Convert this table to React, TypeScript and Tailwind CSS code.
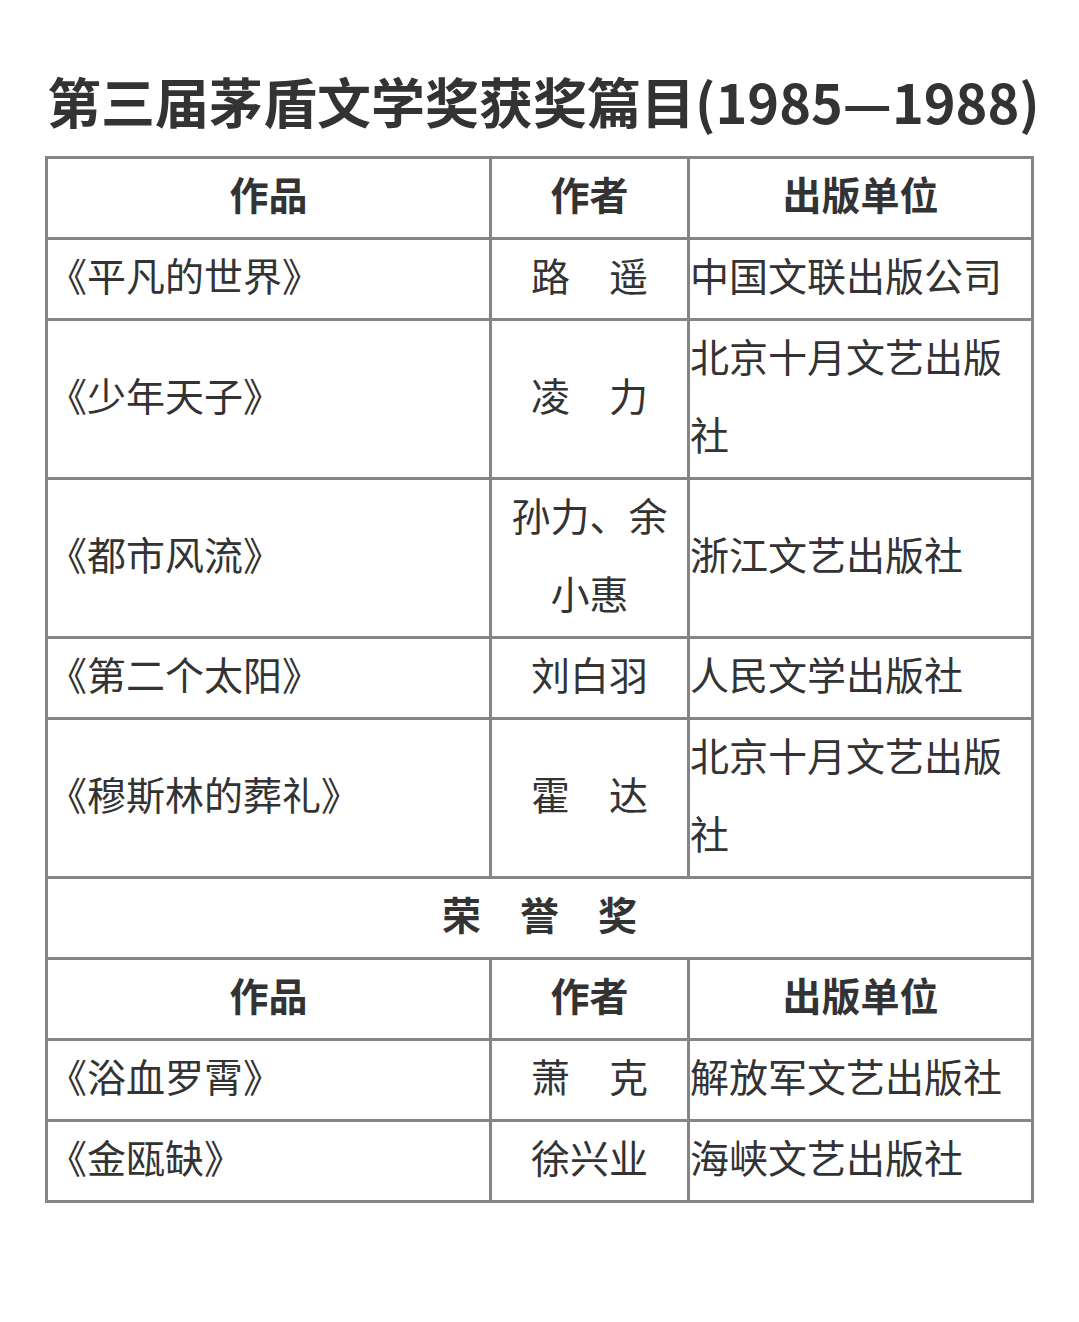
const rows: { work: string; author: React.ReactNode; pub: React.ReactNode }[] = [
  { work: "《平凡的世界》", author: "路　遥", pub: "中国文联出版公司" },
  {
    work: "《少年天子》",
    author: "凌　力",
    pub: (
      <>
        北京十月文艺出版
        <br />社
      </>
    ),
  },
  {
    work: "《都市风流》",
    author: (
      <>
        孙力、余
        <br />
        小惠
      </>
    ),
    pub: "浙江文艺出版社",
  },
  { work: "《第二个太阳》", author: "刘白羽", pub: "人民文学出版社" },
  {
    work: "《穆斯林的葬礼》",
    author: "霍　达",
    pub: (
      <>
        北京十月文艺出版
        <br />社
      </>
    ),
  },
];

const honor = [
  { work: "《浴血罗霄》", author: "萧　克", pub: "解放军文艺出版社" },
  { work: "《金瓯缺》", author: "徐兴业", pub: "海峡文艺出版社" },
];

const cell = "border-[3px] border-[#858585] p-0 align-middle";

// nudges the glyphs up a little to sit like the reference font
function T({ children }: { children: React.ReactNode }) {
  return <span className="block -translate-y-[5px]">{children}</span>;
}

function HeaderRow() {
  return (
    <tr className="font-bold">
      <th className={`${cell} text-center`}>
        <T>作品</T>
      </th>
      <th className={`${cell} text-center`}>
        <T>作者</T>
      </th>
      <th className={`${cell} text-center`}>
        <T>出版单位</T>
      </th>
    </tr>
  );
}

function Row({ work, author, pub }: { work: string; author: React.ReactNode; pub: React.ReactNode }) {
  return (
    <tr>
      <td className={`${cell} text-left`}>
        <T>{work}</T>
      </td>
      <td className={`${cell} text-center`}>
        <T>{author}</T>
      </td>
      <td className={`${cell} text-left`}>
        <T>{pub}</T>
      </td>
    </tr>
  );
}

export default function App() {
  return (
    <div
      className="min-h-[1322px] w-[1079px] bg-white px-[45px] pt-[66px] text-[#333]"
      style={{ fontFamily: '"Noto Sans CJK SC", "Noto Sans", sans-serif' }}
    >
      <h1 className="pl-[2px] text-[54px] font-bold leading-[70px] whitespace-nowrap">
        第三届茅盾文学奖获奖篇目(1985—1988)
      </h1>
      <table className="mt-[20px] w-[986px] table-fixed border-collapse text-[39px] leading-[78px]">
        <colgroup>
          <col className="w-[444px]" />
          <col className="w-[198px]" />
          <col className="w-[344px]" />
        </colgroup>
        <tbody>
          <HeaderRow />
          {rows.map((r, i) => (
            <Row key={i} {...r} />
          ))}
          <tr>
            <td colSpan={3} className={`${cell} text-center font-bold`}>
              <T>荣　誉　奖</T>
            </td>
          </tr>
          <HeaderRow />
          {honor.map((r, i) => (
            <Row key={i} {...r} />
          ))}
        </tbody>
      </table>
    </div>
  );
}
